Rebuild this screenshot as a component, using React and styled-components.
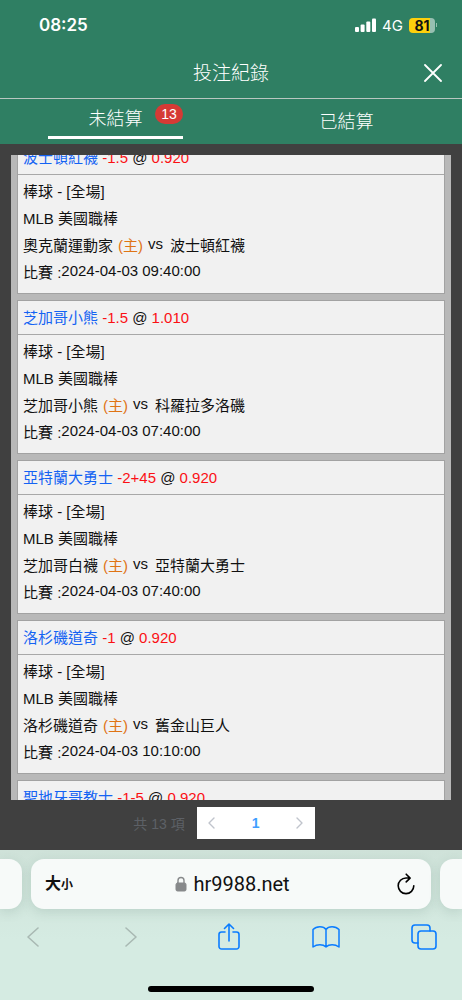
import React, { useLayoutEffect, useRef } from "react";
import styled, { createGlobalStyle } from "styled-components";

const GlobalStyle = createGlobalStyle`
  * {
    box-sizing: border-box;
  }

  body {
    margin: 0;
    background: #404040;
    font-family: "Liberation Sans", "Noto Sans CJK TC", sans-serif;
  }

  button {
    display: flex;
    align-items: center;
    justify-content: center;
    margin: 0;
    padding: 0;
    border: none;
    background: none;
    color: inherit;
    font: inherit;
    cursor: pointer;
  }
`;

const Page = styled.div`
  display: flex;
  flex-direction: column;
  height: 100vh;
  background: #404040;
`;

const Header = styled.header`
  background: #2f7f63;
  color: #ffffff;
`;

const StatusBar = styled.div`
  display: flex;
  align-items: center;
  justify-content: space-between;
  height: 48px;
  padding: 2px 25px 0 39px;
  font-family: Inter, sans-serif;
`;

const Clock = styled.span`
  font-size: 17px;
  font-weight: 600;
`;

const StatusIcons = styled.div`
  display: flex;
  align-items: center;
  gap: 6px;
  font-size: 15px;
`;

const Battery = styled.span`
  width: 26px;
  height: 15px;
  border-radius: 4px;
  background: linear-gradient(to right, #fdd00c 82%, #97bfb1 82%);
  color: #111111;
  font-size: 14px;
  font-weight: 700;
  line-height: 15px;
  text-align: center;
`;

const BatteryGroup = styled.div`
  display: flex;
  align-items: center;
  gap: 1px;

  &::after {
    content: "";
    width: 1px;
    height: 4px;
    background: #97bfb1;
  }
`;

const TitleBar = styled.div`
  display: grid;
  grid-template-columns: 40px 1fr 40px;
  align-items: center;
  height: 51px;
  padding: 0 9px;
  border-bottom: 1px solid #b9c7c1;
`;

const Title = styled.h1`
  grid-column: 2;
  margin: 0;
  padding-top: 2px;
  font-size: 19px;
  font-weight: 300;
  line-height: 28px;
  text-align: center;
`;

const Tabs = styled.nav`
  display: flex;
  height: 45px;
`;

const Tab = styled.button`
  && {
    flex: 1;
    flex-direction: column;
    font-size: 18px;
    font-weight: 300;
    line-height: 28px;
  }
`;

const TabLabel = styled.span`
  position: relative;
  width: 135px;
  padding-bottom: ${({ $active }) => ($active ? "3px" : "0")};
  border-bottom: ${({ $active }) => ($active ? "3px solid #ffffff" : "none")};
`;

const Badge = styled.span`
  position: absolute;
  top: -1px;
  right: 0;
  width: 28px;
  border-radius: 10px;
  background: #d53a35;
  font-size: 14px;
  line-height: 20px;
`;

const BetList = styled.ul`
  flex: 1;
  display: flex;
  flex-direction: column;
  gap: 6px;
  min-height: 0;
  margin: 11px 11px 0;
  padding: 6px;
  overflow-y: auto;
  scrollbar-width: none;
  background: #b8b8b8;
  list-style: none;
`;

const Card = styled.li`
  flex: none;
  border: 1px solid #a2a2a2;
  background: #f1f1f1;
  color: #111111;
  font-size: 15px;
`;

const CardTitle = styled.div`
  padding: 4px 5px 3px;
  border-bottom: 1px solid #a8a8a8;
  line-height: 26px;
`;

const CardBody = styled.div`
  padding: 3px 5px 7px;
`;

const Line = styled.div`
  display: flex;
  align-items: flex-start;
  height: 27px;
  line-height: 27px;
  white-space: pre;
`;

const Raised = styled.span`
  line-height: 24px;
`;

const Versus = styled(Raised)`
  margin: 0 7px 0 5px;
`;

const Team = styled.span`
  color: #1463f3;
`;

const Odds = styled.span`
  color: #fb1014;
`;

const Home = styled.span`
  margin-left: 5px;
  color: #df7414;
`;

const Pagination = styled.div`
  display: flex;
  align-items: center;
  justify-content: center;
  gap: 12px;
  height: 50px;
  padding: 0 14px 4px 0;
  color: #5d6066;
  font-size: 14px;
`;

const Pager = styled.div`
  display: flex;
  height: 32px;
  background: #ffffff;
  color: #c0c4cc;
`;

const PageArrow = styled.button`
  width: 30px;
`;

const PageNumber = styled.button`
  && {
    width: 58px;
    color: #409eff;
    font-weight: 700;
  }
`;

const Browser = styled.footer`
  display: flex;
  flex-direction: column;
  height: 150px;
  background: linear-gradient(#cfe2d9, #d5ebe2 60%);
  font-family: Inter, "Noto Sans CJK TC", sans-serif;
`;

const AddressRow = styled.div`
  display: flex;
  gap: 9px;
  padding-top: 9px;
`;

const AddressBar = styled.div`
  flex: 1;
  display: grid;
  grid-template-columns: 60px 1fr 60px;
  align-items: center;
  height: 50px;
  padding: 0 10px 0 13px;
  border-radius: 13px;
  background: #f7faf9;
  box-shadow: 0 3px 12px rgba(60, 100, 85, 0.16);
`;

const NextTab = styled.div`
  width: 22px;
  height: 50px;
  border-radius: ${({ $side }) => ($side === "left" ? "0 13px 13px 0" : "13px 0 0 13px")};
  background: #f7faf9;
  box-shadow: 0 3px 12px rgba(60, 100, 85, 0.16);
`;

const TextSize = styled.button`
  && {
    align-items: baseline;
    justify-content: flex-start;
    padding-left: 1px;
    color: #111111;
    font-size: 16px;
    font-weight: 700;
    line-height: 24px;
  }

  small {
    font-size: 12px;
  }
`;

const Url = styled.div`
  display: flex;
  align-items: center;
  justify-content: center;
  gap: 6px;
  color: #111111;
  font-family: Roboto, sans-serif;
  font-size: 20px;
`;

const Reload = styled.button`
  && {
    justify-self: end;
    width: 30px;
  }
`;

const Toolbar = styled.nav`
  display: flex;
  justify-content: space-between;
  padding: 14px 24px 0 19px;
`;

const ToolButton = styled.button`
  && {
    width: 28px;
    height: 28px;
    color: ${({ $muted }) => ($muted ? "#a9b9b3" : "#0a7cff")};
  }
`;

const HomeIndicator = styled.div`
  width: 166px;
  height: 6px;
  margin: auto auto 8px;
  border-radius: 3px;
  background: #000000;
`;

const Icon = styled.svg.attrs({ fill: "none", stroke: "currentColor", "aria-hidden": true })`
  display: block;
  flex: none;
  stroke-linecap: round;
  stroke-linejoin: round;
`;

const bets = [
  { pick: "波士頓紅襪", line: "-1.5", odds: "0.920", home: "奧克蘭運動家", away: "波士頓紅襪", time: "2024-04-03 09:40:00" },
  { pick: "芝加哥小熊", line: "-1.5", odds: "1.010", home: "芝加哥小熊", away: "科羅拉多洛磯", time: "2024-04-03 07:40:00" },
  { pick: "亞特蘭大勇士", line: "-2+45", odds: "0.920", home: "芝加哥白襪", away: "亞特蘭大勇士", time: "2024-04-03 07:40:00" },
  { pick: "洛杉磯道奇", line: "-1", odds: "0.920", home: "洛杉磯道奇", away: "舊金山巨人", time: "2024-04-03 10:10:00" },
  { pick: "聖地牙哥教士", line: "-1-5", odds: "0.920", home: "聖地牙哥教士", away: "聖路易紅雀", time: "2024-04-03 09:40:00" },
];

const BetCard = ({ bet }) => (
  <Card>
    <CardTitle>
      <Team>{bet.pick}</Team> <Odds>{bet.line}</Odds> @ <Odds>{bet.odds}</Odds>
    </CardTitle>
    <CardBody>
      <Line>棒球 - [全場]</Line>
      <Line>MLB 美國職棒</Line>
      <Line>
        {bet.home}
        <Home>(主)</Home>
        <Versus>vs</Versus>
        {bet.away}
      </Line>
      <Line>
        比賽 :<Raised>{bet.time}</Raised>
      </Line>
    </CardBody>
  </Card>
);

const App = () => {
  const listRef = useRef(null);

  // Open the list slightly scrolled, with the first card under the tabs
  useLayoutEffect(() => {
    listRef.current.scrollTop = 21;
  }, []);

  return (
    <Page>
      <GlobalStyle />
      <Header>
        <StatusBar>
          <Clock>08:25</Clock>
          <StatusIcons>
            <Icon width="21" height="14" viewBox="0 0 21 14">
              <g fill="currentColor" stroke="none">
                <rect x="0" y="9" width="4" height="5" rx="1" />
                <rect x="5.600" y="6.500" width="4" height="7.500" rx="1" />
                <rect x="11.300" y="3.500" width="4" height="10.500" rx="1" />
                <rect x="17" y="0.500" width="4" height="13.500" rx="1" />
              </g>
            </Icon>
            <span>4G</span>
            <BatteryGroup>
              <Battery>81</Battery>
            </BatteryGroup>
          </StatusIcons>
        </StatusBar>
        <TitleBar>
          <Title>投注紀錄</Title>
          <button type="button" aria-label="關閉">
            <Icon width="18" height="18" viewBox="0 0 18 18" strokeWidth="1.8">
              <path d="M1 1l16 16M17 1L1 17" />
            </Icon>
          </button>
        </TitleBar>
        <Tabs>
          <Tab type="button">
            <TabLabel $active>
              未結算
              <Badge>13</Badge>
            </TabLabel>
          </Tab>
          <Tab type="button">
            <TabLabel>已結算</TabLabel>
          </Tab>
        </Tabs>
      </Header>

      <BetList ref={listRef}>
        {bets.map((bet) => (
          <BetCard key={bet.pick} bet={bet} />
        ))}
      </BetList>

      <Pagination>
        <span>共 13 項</span>
        <Pager>
          <PageArrow type="button" aria-label="上一頁">
            <Icon width="7" height="12" viewBox="0 0 7 12" strokeWidth="1.4">
              <path d="M6 1L1 6l5 5" />
            </Icon>
          </PageArrow>
          <PageNumber type="button">1</PageNumber>
          <PageArrow type="button" aria-label="下一頁">
            <Icon width="7" height="12" viewBox="0 0 7 12" strokeWidth="1.4">
              <path d="M1 1l5 5-5 5" />
            </Icon>
          </PageArrow>
        </Pager>
      </Pagination>

      <Browser>
        <AddressRow>
          <NextTab $side="left" />
          <AddressBar>
            <TextSize type="button">
              大<small>小</small>
            </TextSize>
            <Url>
              <Icon width="12" height="16" viewBox="0 0 12 16">
                <rect x="1" y="7" width="10" height="8" rx="1.5" fill="#87898b" stroke="#87898b" />
                <path d="M3 7V4.500a3 3 0 0 1 6 0V7" stroke="#87898b" strokeWidth="1.4" />
              </Icon>
              <span>hr9988.net</span>
            </Url>
            <Reload type="button" aria-label="重新載入">
              <Icon width="18" height="22" viewBox="0 0 18 22" strokeWidth="1.6">
                <path d="M12.800 5H9a7.800 7.800 0 1 0 7.800 7.800M9.200 1.200l3.900 3.900-3.900 3.800" />
              </Icon>
            </Reload>
          </AddressBar>
          <NextTab $side="right" />
        </AddressRow>
        <Toolbar>
          <ToolButton type="button" aria-label="返回" $muted>
            <Icon width="12" height="20" viewBox="0 0 12 20" strokeWidth="1.6">
              <path d="M11 1L1 10l10 9" />
            </Icon>
          </ToolButton>
          <ToolButton type="button" aria-label="前進" $muted>
            <Icon width="12" height="20" viewBox="0 0 12 20" strokeWidth="1.6">
              <path d="M1 1l10 9-10 9" />
            </Icon>
          </ToolButton>
          <ToolButton type="button" aria-label="分享">
            <Icon width="24" height="28" viewBox="0 0 24 28" strokeWidth="1.6">
              <path d="M8 9H4.500A2.500 2.500 0 0 0 2 11.500v12A2.500 2.500 0 0 0 4.500 26h15a2.500 2.500 0 0 0 2.500-2.500v-12A2.500 2.500 0 0 0 19.500 9H16M12 18V1M7.500 5.500L12 1l4.500 4.500" />
            </Icon>
          </ToolButton>
          <ToolButton type="button" aria-label="書籤">
            <Icon width="28" height="24" viewBox="0 0 28 24" strokeWidth="1.5">
              <path d="M14 4.500C11.500.8 4.500.8 1 4.500V22c4-3 10-3 13 0 3-3 9-3 13 0V4.500C23.500.8 16.500.8 14 4.500zM14 4.500V22" />
            </Icon>
          </ToolButton>
          <ToolButton type="button" aria-label="分頁">
            <Icon width="26" height="26" viewBox="0 0 26 26" strokeWidth="1.6">
              <rect x="7" y="7" width="18" height="18" rx="3" />
              <path d="M7 19H4a3 3 0 0 1-3-3V4a3 3 0 0 1 3-3h12a3 3 0 0 1 3 3v3" />
            </Icon>
          </ToolButton>
        </Toolbar>
        <HomeIndicator />
      </Browser>
    </Page>
  );
};

export default App;
